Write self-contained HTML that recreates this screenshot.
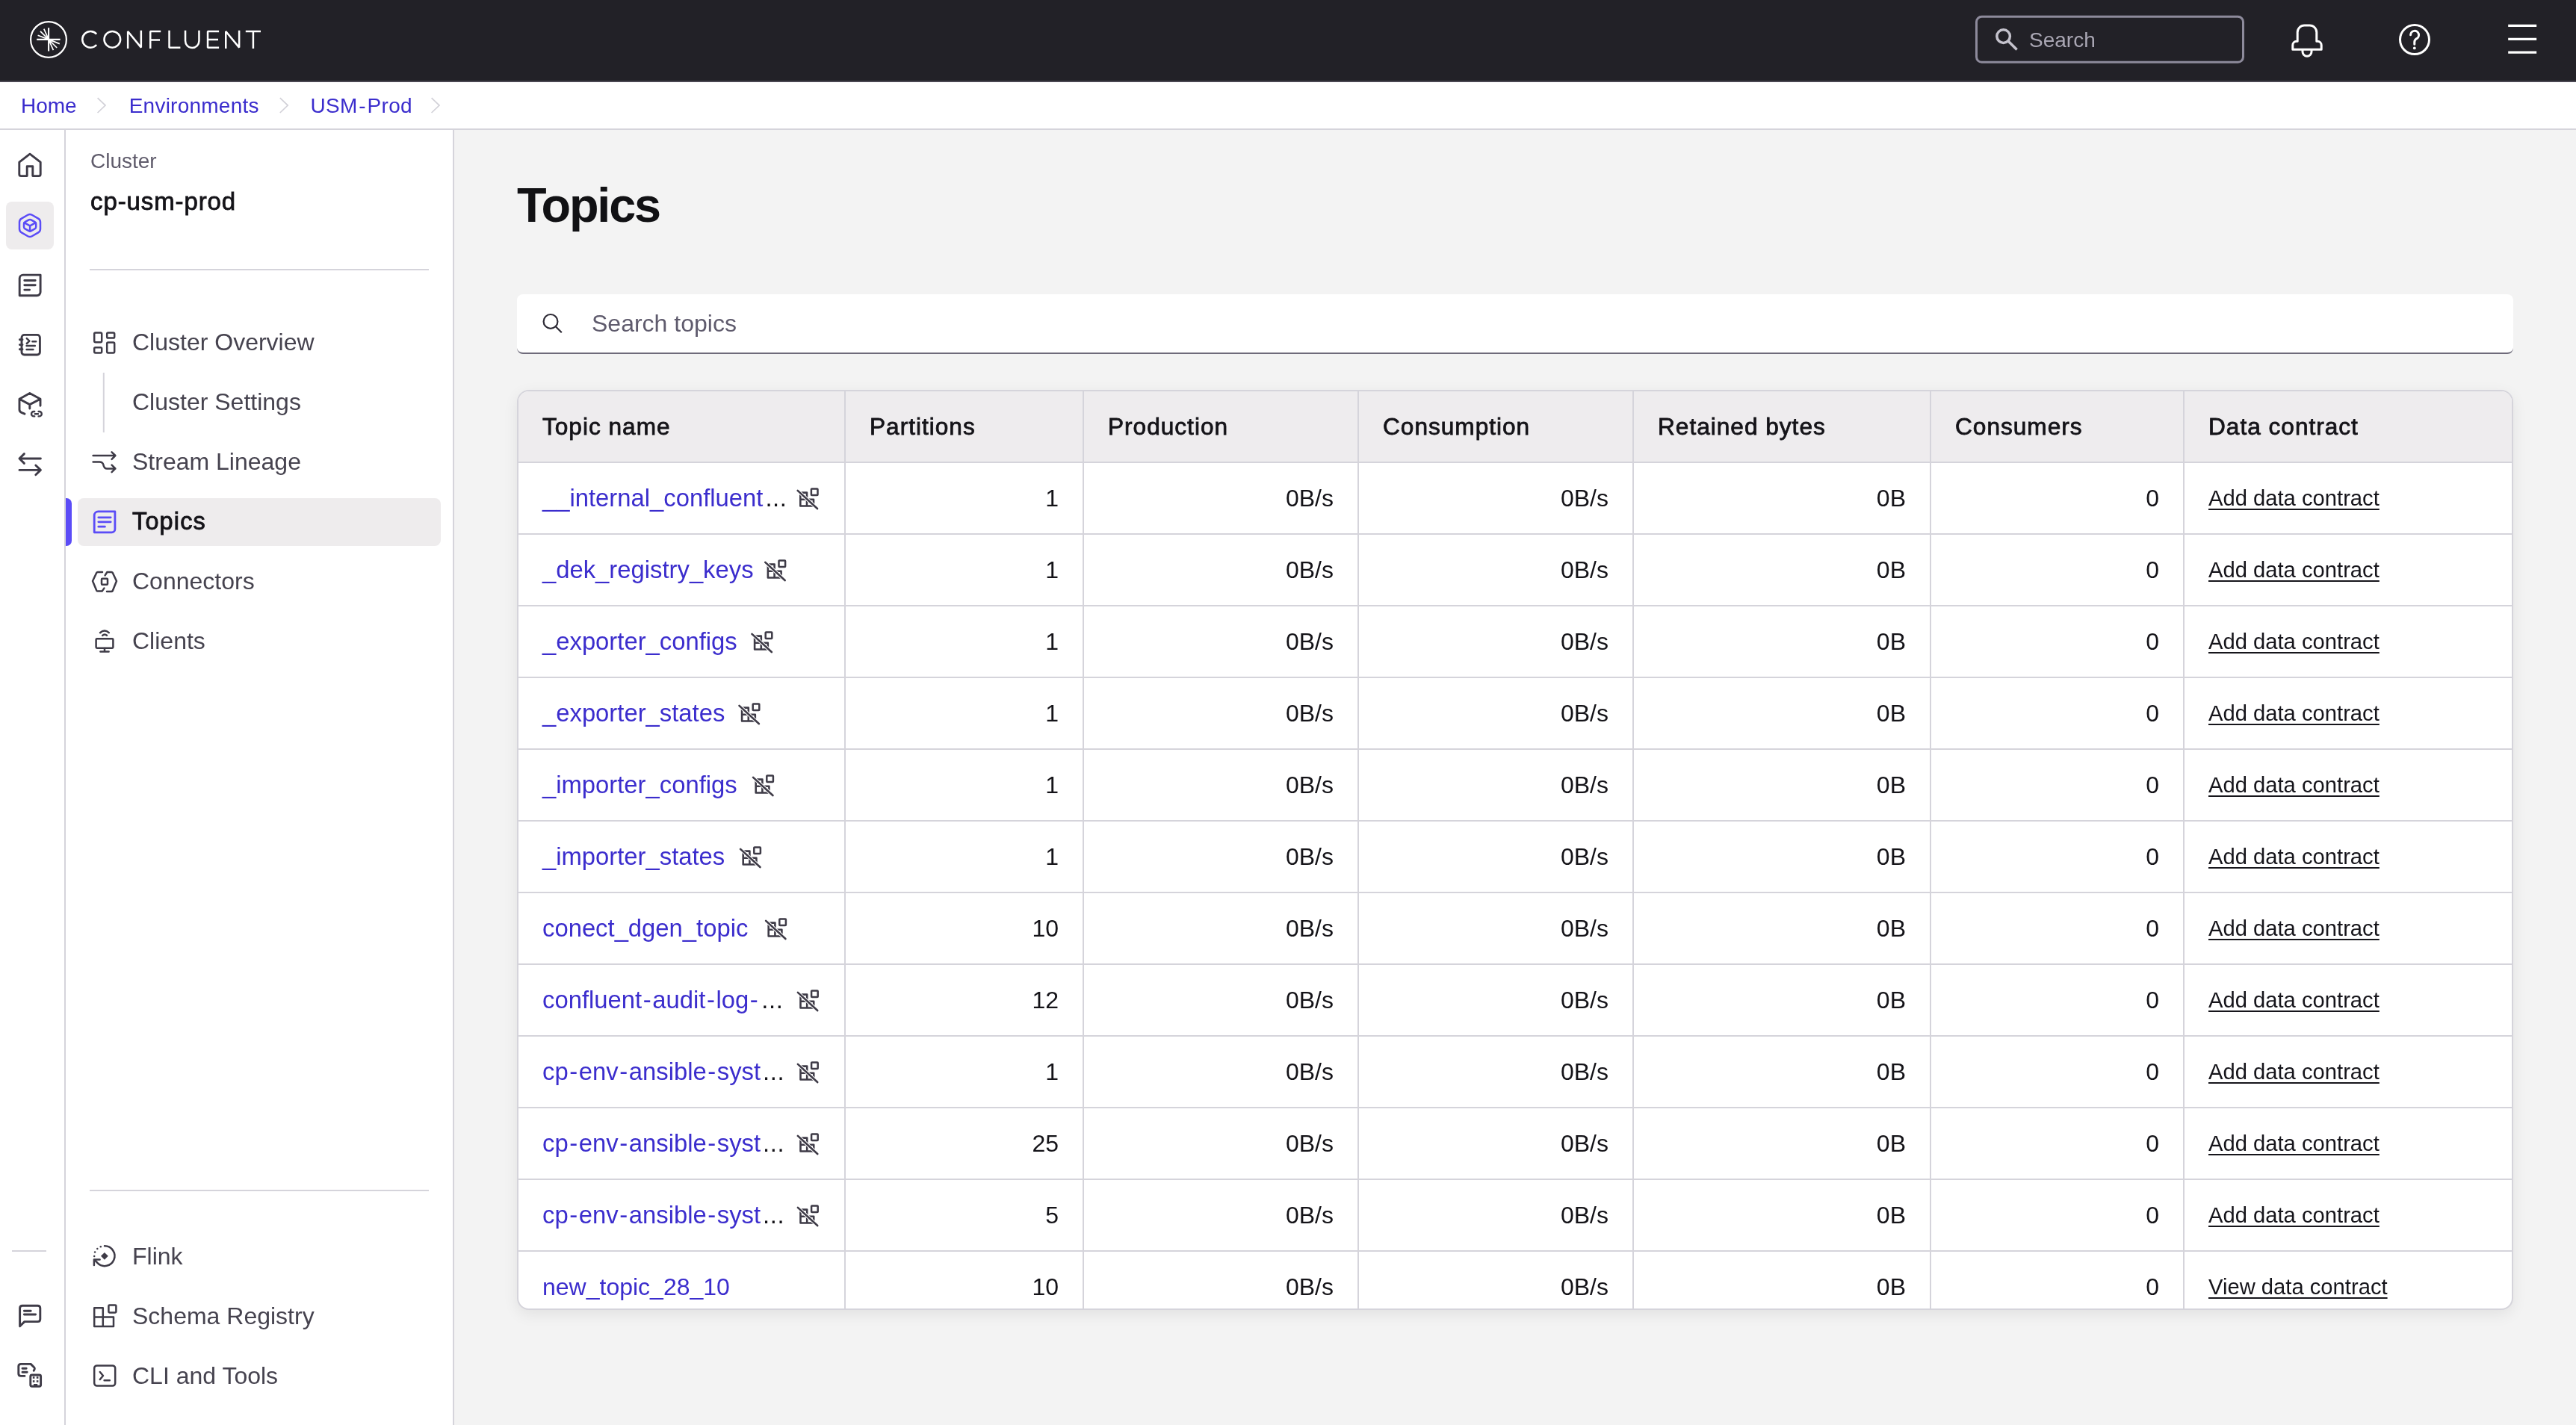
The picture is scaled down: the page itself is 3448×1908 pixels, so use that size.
<!DOCTYPE html>
<html><head><meta charset="utf-8"><title>Topics</title>
<style>
html,body{margin:0;padding:0;background:#f3f3f3;overflow:hidden}
#app{zoom:2;position:relative;-webkit-font-smoothing:antialiased;will-change:transform;width:1724px;height:954px;overflow:hidden;background:#f3f3f3;font-family:"Liberation Sans",sans-serif;color:#141318}
@media (max-width:2600px){#app{zoom:1}}
.abs{position:absolute}
.t{position:absolute;white-space:nowrap;line-height:1}
/* header */
#hdr{position:absolute;left:0;top:0;width:1724px;height:54px;background:#222127;border-bottom:1px solid #4a4752}
#crumb{position:absolute;left:0;top:55px;width:1724px;height:31px;background:#fff;border-bottom:1px solid #d5d4db}
#rail{position:absolute;left:0;top:87px;width:43px;height:867px;background:#fff;border-right:1px solid #d5d4db}
#side{position:absolute;left:44px;top:87px;width:259px;height:867px;background:#fff;border-right:1px solid #d5d4db}
.crumb{font-size:14px;color:#3b2dcd;margin-top:-2.1px;margin-left:-1px}
.nav{font-size:16px;color:#46434f}
svg{position:absolute;overflow:visible}
.ico{fill:none;stroke:#3e3b47;stroke-width:1.5;stroke-linecap:round;stroke-linejoin:round}
/* main */
#search{position:absolute;left:346px;top:197px;width:1336px;height:39px;background:#fff;border-bottom:1px solid #6e6a7a;border-radius:4px}
#tbl{position:absolute;left:346px;top:261px;width:1334px;height:614px;border:1px solid #d5d4db;border-radius:8px;background:#fff;overflow:hidden;box-shadow:0 3px 10px rgba(0,0,0,0.075)}
.row{display:grid;grid-template-columns:219px 159.5px 184px 184px 199px 169.5px 219px;height:47px;border-bottom:1px solid #d5d4db}
.row>div{border-right:1px solid #d5d4db;height:47px;line-height:47px;padding:0 16px;white-space:nowrap;overflow:hidden;font-size:16px}
.row>div:last-child{border-right:none}
.hd{background:#eeecee}
.hd>div{line-height:47.1px !important;font-size:15.8px;letter-spacing:0.5px;color:#141318;-webkit-text-stroke:0.4px #141318}
.r{text-align:right}
.lnk{color:#3b2dcd}
.ell{color:#141318;letter-spacing:0.3px;margin-left:1.5px}
.hy{margin:0 0.8px}
.nm .lnk{font-size:16.4px}
.dc{font-size:14.6px !important;color:#16151b;text-decoration:underline;text-underline-offset:1.8px;text-decoration-thickness:1px;position:relative;top:-0.5px}
.nm{display:flex;align-items:center}
.nm span{display:inline-block}
</style></head><body>
<div id="app">
  <div id="hdr"><div class="t" style="left:1358px;top:20px;font-size:14px;color:#a9a6b3">Search</div></div>
  <div id="crumb">
    <div class="t crumb" style="left:15px;top:11px">Home</div>
    <div class="t crumb" style="left:87.35px;top:11px;letter-spacing:0.12px">Environments</div>
    <div class="t crumb" style="left:208.8px;top:11px;letter-spacing:0.15px">USM<span class="hy">-</span>Prod</div>
  </div>
  <div id="rail"></div>
  <div id="side">
    <div class="t" style="left:16.5px;top:14px;font-size:14px;color:#5f5b6b">Cluster</div>
    <div class="t" style="left:16.5px;top:39.6px;font-size:16.5px;letter-spacing:0.45px;-webkit-text-stroke:0.4px #141318;color:#141318">cp-usm-prod</div>
    <div class="abs" style="left:16px;top:93px;width:227px;height:1px;background:#d5d4db"></div>
    <div class="t nav" style="left:44.5px;top:134px">Cluster Overview</div>
    <div class="t nav" style="left:44.5px;top:174px">Cluster Settings</div>
    <div class="t nav" style="left:44.5px;top:214px">Stream Lineage</div>
    <div class="abs" style="left:8px;top:246.5px;width:243px;height:32px;background:#eeeced;border-radius:4px"></div>
    <div class="t nav" style="left:44.5px;top:254.1px;font-size:16.2px;letter-spacing:0.6px;-webkit-text-stroke:0.45px #141318;color:#141318">Topics</div>
    <div class="t nav" style="left:44.5px;top:294px">Connectors</div>
    <div class="t nav" style="left:44.5px;top:334px">Clients</div>
    <div class="abs" style="left:16px;top:709.5px;width:227px;height:1px;background:#d5d4db"></div>
    <div class="t nav" style="left:44.5px;top:746px">Flink</div>
    <div class="t nav" style="left:44.5px;top:786px">Schema Registry</div>
    <div class="t nav" style="left:44.5px;top:826px">CLI and Tools</div>
  </div>
  <div class="t" style="left:346px;top:121.7px;font-size:32.4px;font-weight:bold;letter-spacing:-1.1px;color:#111114">Topics</div>
  <div id="search">
    <div class="t" style="left:50px;top:11.7px;font-size:16px;color:#5f5b6d">Search topics</div>
  </div>
  <div id="tbl">
    <div class="row hd">
      <div>Topic name</div><div>Partitions</div><div>Production</div><div>Consumption</div><div>Retained bytes</div><div>Consumers</div><div>Data contract</div>
    </div>
    <div class="row"><div class="nm"><span class="lnk">__internal_confluent<span class="ell">...</span></span><i class="nsi"></i></div><div class="r">1</div><div class="r">0B/s</div><div class="r">0B/s</div><div class="r">0B</div><div class="r">0</div><div><span class="dc">Add data contract</span></div></div>
    <div class="row"><div class="nm"><span class="lnk">_dek_registry_keys</span><i class="nsi"></i></div><div class="r">1</div><div class="r">0B/s</div><div class="r">0B/s</div><div class="r">0B</div><div class="r">0</div><div><span class="dc">Add data contract</span></div></div>
    <div class="row"><div class="nm"><span class="lnk">_exporter_configs</span><i class="nsi"></i></div><div class="r">1</div><div class="r">0B/s</div><div class="r">0B/s</div><div class="r">0B</div><div class="r">0</div><div><span class="dc">Add data contract</span></div></div>
    <div class="row"><div class="nm"><span class="lnk">_exporter_states</span><i class="nsi"></i></div><div class="r">1</div><div class="r">0B/s</div><div class="r">0B/s</div><div class="r">0B</div><div class="r">0</div><div><span class="dc">Add data contract</span></div></div>
    <div class="row"><div class="nm"><span class="lnk">_importer_configs</span><i class="nsi"></i></div><div class="r">1</div><div class="r">0B/s</div><div class="r">0B/s</div><div class="r">0B</div><div class="r">0</div><div><span class="dc">Add data contract</span></div></div>
    <div class="row"><div class="nm"><span class="lnk">_importer_states</span><i class="nsi"></i></div><div class="r">1</div><div class="r">0B/s</div><div class="r">0B/s</div><div class="r">0B</div><div class="r">0</div><div><span class="dc">Add data contract</span></div></div>
    <div class="row"><div class="nm"><span class="lnk">conect_dgen_topic</span><i class="nsi"></i></div><div class="r">10</div><div class="r">0B/s</div><div class="r">0B/s</div><div class="r">0B</div><div class="r">0</div><div><span class="dc">Add data contract</span></div></div>
    <div class="row"><div class="nm"><span class="lnk">confluent<span class="hy">-</span>audit<span class="hy">-</span>log<span class="hy">-</span><span class="ell">...</span></span><i class="nsi"></i></div><div class="r">12</div><div class="r">0B/s</div><div class="r">0B/s</div><div class="r">0B</div><div class="r">0</div><div><span class="dc">Add data contract</span></div></div>
    <div class="row"><div class="nm"><span class="lnk">cp<span class="hy">-</span>env<span class="hy">-</span>ansible<span class="hy">-</span>syst<span class="ell">...</span></span><i class="nsi"></i></div><div class="r">1</div><div class="r">0B/s</div><div class="r">0B/s</div><div class="r">0B</div><div class="r">0</div><div><span class="dc">Add data contract</span></div></div>
    <div class="row"><div class="nm"><span class="lnk">cp<span class="hy">-</span>env<span class="hy">-</span>ansible<span class="hy">-</span>syst<span class="ell">...</span></span><i class="nsi"></i></div><div class="r">25</div><div class="r">0B/s</div><div class="r">0B/s</div><div class="r">0B</div><div class="r">0</div><div><span class="dc">Add data contract</span></div></div>
    <div class="row"><div class="nm"><span class="lnk">cp<span class="hy">-</span>env<span class="hy">-</span>ansible<span class="hy">-</span>syst<span class="ell">...</span></span><i class="nsi"></i></div><div class="r">5</div><div class="r">0B/s</div><div class="r">0B/s</div><div class="r">0B</div><div class="r">0</div><div><span class="dc">Add data contract</span></div></div>
    <div class="row"><div class="nm"><span class="lnk" style="font-size:16px">new_topic_28_10</span></div><div class="r">10</div><div class="r">0B/s</div><div class="r">0B/s</div><div class="r">0B</div><div class="r">0</div><div><span class="dc">View data contract</span></div></div>
  </div>

  <svg id="ov" style="left:0;top:0" width="1724" height="954" viewBox="0 0 1724 954">
    <!-- logo -->
    <g fill="none" stroke="#fff" stroke-linecap="butt">
      <circle cx="32.5" cy="26.5" r="11.95" stroke-width="1.1"/>
      <path d="M32.55,18.6V34.3M24.6,26.45H40.3" stroke-width="1.05"/>
      <path d="M32.55,26.45L25.3,23.6M32.55,26.45L27,20.9M32.55,26.45L29.4,19.3M32.55,26.45L39.9,29.3M32.55,26.45L38.1,32M32.55,26.45L35.7,33.6" stroke-width="0.85"/>
    </g>
    <g transform="scale(0.5)" fill="none" stroke="#fff" stroke-width="2.5" stroke-linejoin="bevel">
      <path d="M129.2,45.6A10.85,10.85 0 1 0 129.2,60"/>
      <circle cx="150.3" cy="52.8" r="10.85"/>
      <path d="M171.15,64.9V42L188.85,63.6V40.7"/>
      <path d="M201.25,64.9V42H215.2M201.25,53.5H214"/>
      <path d="M226.55,40.7V63.65H241.4"/>
      <path d="M248.05,40.7V54.8A9.2,9.2 0 0 0 266.45,54.8V40.7"/>
      <path d="M293.1,42H278.05V63.65H293.1M278.05,52.9H292"/>
      <path d="M302.25,64.9V42L320.15,63.6V40.7"/>
      <path d="M328.8,42H349M338.9,42V64.9"/>
    </g>
    <!-- header search -->
    <rect x="1322.75" y="11.15" width="178.5" height="30.5" rx="3.5" fill="none" stroke="#8d8a9b" stroke-width="1.5"/>
    <g fill="none" stroke="#c4c2cc" stroke-width="1.75">
      <circle cx="1340.8" cy="24.3" r="4.4"/>
      <path d="M1344,27.5L1349.8,33.3"/>
    </g>
    <!-- bell -->
    <g fill="none" stroke="#fff" stroke-width="1.5" stroke-linejoin="round">
      <path d="M1537.6,27.6V21.6A4.6,4.6 0 0 1 1542.2,17H1545.8A4.6,4.6 0 0 1 1550.4,21.6V27.6H1551A2.6,2.6 0 0 1 1553.6,30.2V33.1H1534.4V30.2A2.6,2.6 0 0 1 1537,27.6Z"/>
      <path d="M1541,33.1V34.6A3,3 0 0 0 1547,34.6V33.1"/>
    </g>
    <!-- help -->
    <g fill="none" stroke="#fff" stroke-width="1.5" stroke-linecap="round">
      <circle cx="1616" cy="26.55" r="9.75"/>
      <path d="M1613.3,23.4A2.75,2.75 0 1 1 1617.2,25.9C1616.3,26.5 1615.9,27.1 1615.9,28.2V29.6"/>
    </g>
    <circle cx="1615.9" cy="32.2" r="0.95" fill="#fff"/>
    <!-- hamburger -->
    <path d="M1678.6,17.2H1697.6M1678.6,26.2H1697.6M1678.6,35.1H1697.6" stroke="#fff" stroke-width="1.6"/>
    <!-- breadcrumb chevrons -->
    <path d="M65.3,65.6L70.5,70.55L65.3,75.5M187.4,65.6L192.6,70.55L187.4,75.5M288.8,65.6L294,70.55L288.8,75.5" fill="none" stroke="#d2d1d8" stroke-width="0.85"/>
    <!-- rail highlight -->
    <rect x="4" y="135" width="32" height="32" rx="4" fill="#eeeced"/>
    <g class="ico" style="stroke-width:1.45">
      <!-- home -->
      <path d="M12.9,108.6L20,103.1L27.1,108.6V116.6Q27.1,117.8 25.9,117.8H21.9V111.4H18.1V117.8H14.1Q12.9,117.8 12.9,116.6Z"/>
      <!-- doc -->
      <path d="M13.1,186.4A2.35,2.35 0 0 1 15.45,184.05H27.05V195.55A2.3,2.3 0 0 1 24.75,197.85H13.1Z"/>
      <path d="M16.4,187.75H23.6M16.4,190.9H23.6M16.4,194.05H19.8"/>
      <!-- notebook -->
      <rect x="14.5" y="224.2" width="12.2" height="13.3" rx="1.8"/>
      <path d="M13.2,227.4H15M13.2,230.8H15M13.2,233.9H15"/><path style="stroke-width:1.25" d="M17.9,226.6L19.7,228.3L17.9,230M21.7,228.6H24.1M17.8,231.5H23.4M17.8,234H22.2"/>
      <!-- cube link -->
      <path d="M13,274.2V267.1L19.9,263.2L27,267.1V271.6M13,267.1L19.9,270.8L27,267.1M19.9,270.8V273.5M13,274.2Q13,275.5 14.4,276.2L16.5,277.1"/>
      <path d="M23.1,275.5H22.6A1.6,1.6 0 0 0 22.6,278.7H23.1M25.8,275.5H26.3A1.6,1.6 0 0 1 26.3,278.7H25.8M23.4,277.1H25.5" style="stroke-width:1.2"/>
      <!-- arrows -->
      <path d="M13,307H27.2M16.2,303.8L13,307L16.2,310.2M27.2,314.7H13M23.9,311.5L27.2,314.7L23.9,317.9"/>
      <!-- chat -->
      <path d="M13.3,887.9V875.8Q13.3,874.1 15,874.1H25.2Q26.9,874.1 26.9,875.8V883.1Q26.9,884.8 25.2,884.8H16.4Z"/>
      <path d="M16.2,877.6H20.6M16.2,880H23.8"/>
      <!-- building chat -->
      <path d="M16.5,921.2H14Q12.4,921.2 12.4,919.6V914.8Q12.4,913.2 14,913.2H20.6L22.8,915.4Q23.4,916 23.1,916.7L22.6,917.6"/>
      <path d="M15,916.1H17.6M15,918.6H18.1"/>
      <rect x="20.4" y="920.5" width="6.9" height="7.6" rx="1"/>
    </g>
    <g fill="#3e3b47">
      <rect x="21.9" y="921.6" width="1.3" height="1.3"/><rect x="24.4" y="921.6" width="1.3" height="1.3"/>
      <rect x="21.9" y="924.1" width="1.3" height="1.3"/><rect x="24.4" y="924.1" width="1.3" height="1.3"/>
      <rect x="22.5" y="926.5" width="2.6" height="1.8"/>
    </g>
    <!-- rail active cube -->
    <g fill="none" stroke="#5b4cf7" stroke-width="1.25" stroke-linejoin="round" stroke-linecap="round">
      <path d="M18.61,143.89Q20.00,143.10 21.39,143.89L25.61,146.31Q27.00,147.10 27.00,148.70L27.00,153.30Q27.00,154.90 25.61,155.69L21.39,158.11Q20.00,158.90 18.61,158.11L14.39,155.69Q13.00,154.90 13.00,153.30L13.00,148.70Q13.00,147.10 14.39,146.31Z"/>
      <path d="M19.26,147.23Q20.05,146.80 20.84,147.23L23.31,148.57Q24.10,149.00 24.10,149.90L24.10,151.90Q24.10,152.80 23.31,153.23L20.84,154.57Q20.05,155.00 19.26,154.57L16.79,153.23Q16.00,152.80 16.00,151.90L16.00,149.90Q16.00,149.00 16.79,148.57Z"/>
      <path d="M16.2,149.1L20.05,151.2L23.9,149.1M20.05,151.2V154.8"/>
    </g>
    <!-- bottom rail line -->
    <rect x="8" y="837" width="23" height="1" fill="#d5d4db"/>
    <!-- sidebar icons -->
    <g class="ico" style="stroke-width:1.25">
      <rect x="63.1" y="222.7" width="5" height="6.4" rx="0.8"/>
      <rect x="63.1" y="232.6" width="5" height="3.6" rx="0.8"/>
      <rect x="71.6" y="222.7" width="5" height="3.6" rx="0.8"/>
      <rect x="71.6" y="229.3" width="5" height="6.9" rx="0.8"/>
      <!-- stream lineage -->
      <path d="M62.3,305H77.2M74.8,302.7L77.2,305L74.8,307.4"/>
      <path d="M62.3,309.3H66.6Q68.7,309.3 69.2,311.2Q69.7,313.7 71.6,313.7H77.2M74.8,311.3L77.2,313.7L74.8,316.1"/>
      <!-- connectors -->
      <path d="M68.5,383H65.4Q64.9,383 64.6,383.5L62,389L64.6,395.3Q64.9,395.8 65.4,395.8H68.3L69.7,393.8"/>
      <path d="M71.5,396H74.6Q75.1,396 75.4,395.5L78,389L75.4,383.5Q75.1,383 74.6,383H71.7L70.3,385.2"/>
      <rect x="68" y="387.4" width="4" height="4" rx="0.5"/>
      <!-- clients -->
      <rect x="64.3" y="427.6" width="11.4" height="6.3" rx="0.6"/>
      <path d="M70,434V436.2M67.2,436.3H72.8M67,423.6Q70,420.9 72.9,423.6M68.6,425.4Q70,424.1 71.5,425.4"/>
      <!-- flink -->
      <path d="M70,834.15A6.7,6.7 0 1 1 65.3,845.6L63.4,843.6"/>
      <path d="M66.8,843.3H62.95V847"/>
      <!-- schema registry -->
      <path d="M63.1,875.6H68.9V881.8H76V888H63.1Z M63.1,881.8H68.9M68.9,881.8V888"/>
      <rect x="72.7" y="873.7" width="5" height="5" rx="0.6"/>
      <!-- cli -->
      <rect x="63.1" y="914.2" width="14" height="13.6" rx="1.8"/>
      <path d="M66.9,918.5L69,921L66.9,923.5M69.8,924.1H73.4"/>
    </g>
    <g fill="#3e3b47">
      <circle cx="67.4" cy="834.6" r="0.62"/><circle cx="65.15" cy="836" r="0.62"/><circle cx="63.55" cy="838.3" r="0.62"/><circle cx="63.1" cy="841" r="0.62"/>
      <path d="M69.95,838.45L72.4,840.9L69.95,843.35L67.5,840.9Z"/>
    </g>
    <!-- topics active icon -->
    <path d="M44,333.5H44.5A3.5,3.5 0 0 1 48,337V362A3.5,3.5 0 0 1 44.5,365.5H44Z" fill="#5b4cf7"/>
    <g fill="none" stroke="#5b4cf7" stroke-width="1.4" stroke-linecap="round" stroke-linejoin="round">
      <path d="M63.1,345.05A2.6,2.6 0 0 1 65.7,342.45H76.95V354.2A2.2,2.2 0 0 1 74.75,356.4H63.1Z"/>
      <path d="M65.9,346.4H74.1M65.9,349.4H74.1M65.9,352.6H70.2"/>
    </g>
    <!-- sub line -->
    <rect x="68.9" y="249.5" width="1" height="40" fill="#d5d4db"/>
    <!-- search topics icon -->
    <g fill="none" stroke="#2d2a35" stroke-width="1.1">
      <circle cx="368.5" cy="215.2" r="4.7"/>
      <path d="M371.9,218.6L375.9,222.6"/>
    </g>
    <defs><g id="nsi">
      <path d="M2.35,3.3H6.7V7.9H11.2V12.25H2.35Z M2.35,7.9H6.7M6.7,7.9V12.25" fill="none" stroke="#3e3b47" stroke-width="1.3" stroke-linejoin="round"/>
      <rect x="9.65" y="0.7" width="4.3" height="4.3" rx="0.4" fill="none" stroke="#3e3b47" stroke-width="1.25"/>
      <path d="M0.55,1.95L13.7,14" stroke="#fff" stroke-width="2.3"/>
      <path d="M0.55,1.95L13.7,14" stroke="#3e3b47" stroke-width="1.3" stroke-linecap="round"/>
    </g></defs>
    <use href="#nsi" x="533.3" y="326.5"/>
    <use href="#nsi" x="511.6" y="374.5"/>
    <use href="#nsi" x="502.7" y="422.5"/>
    <use href="#nsi" x="494.2" y="470.5"/>
    <use href="#nsi" x="503.5" y="518.5"/>
    <use href="#nsi" x="495" y="566.5"/>
    <use href="#nsi" x="512" y="614.5"/>
    <use href="#nsi" x="533.4" y="662.5"/>
    <use href="#nsi" x="533.4" y="710.5"/>
    <use href="#nsi" x="533.4" y="758.5"/>
    <use href="#nsi" x="533.4" y="806.5"/>
  </svg>
</div>
</body></html>
